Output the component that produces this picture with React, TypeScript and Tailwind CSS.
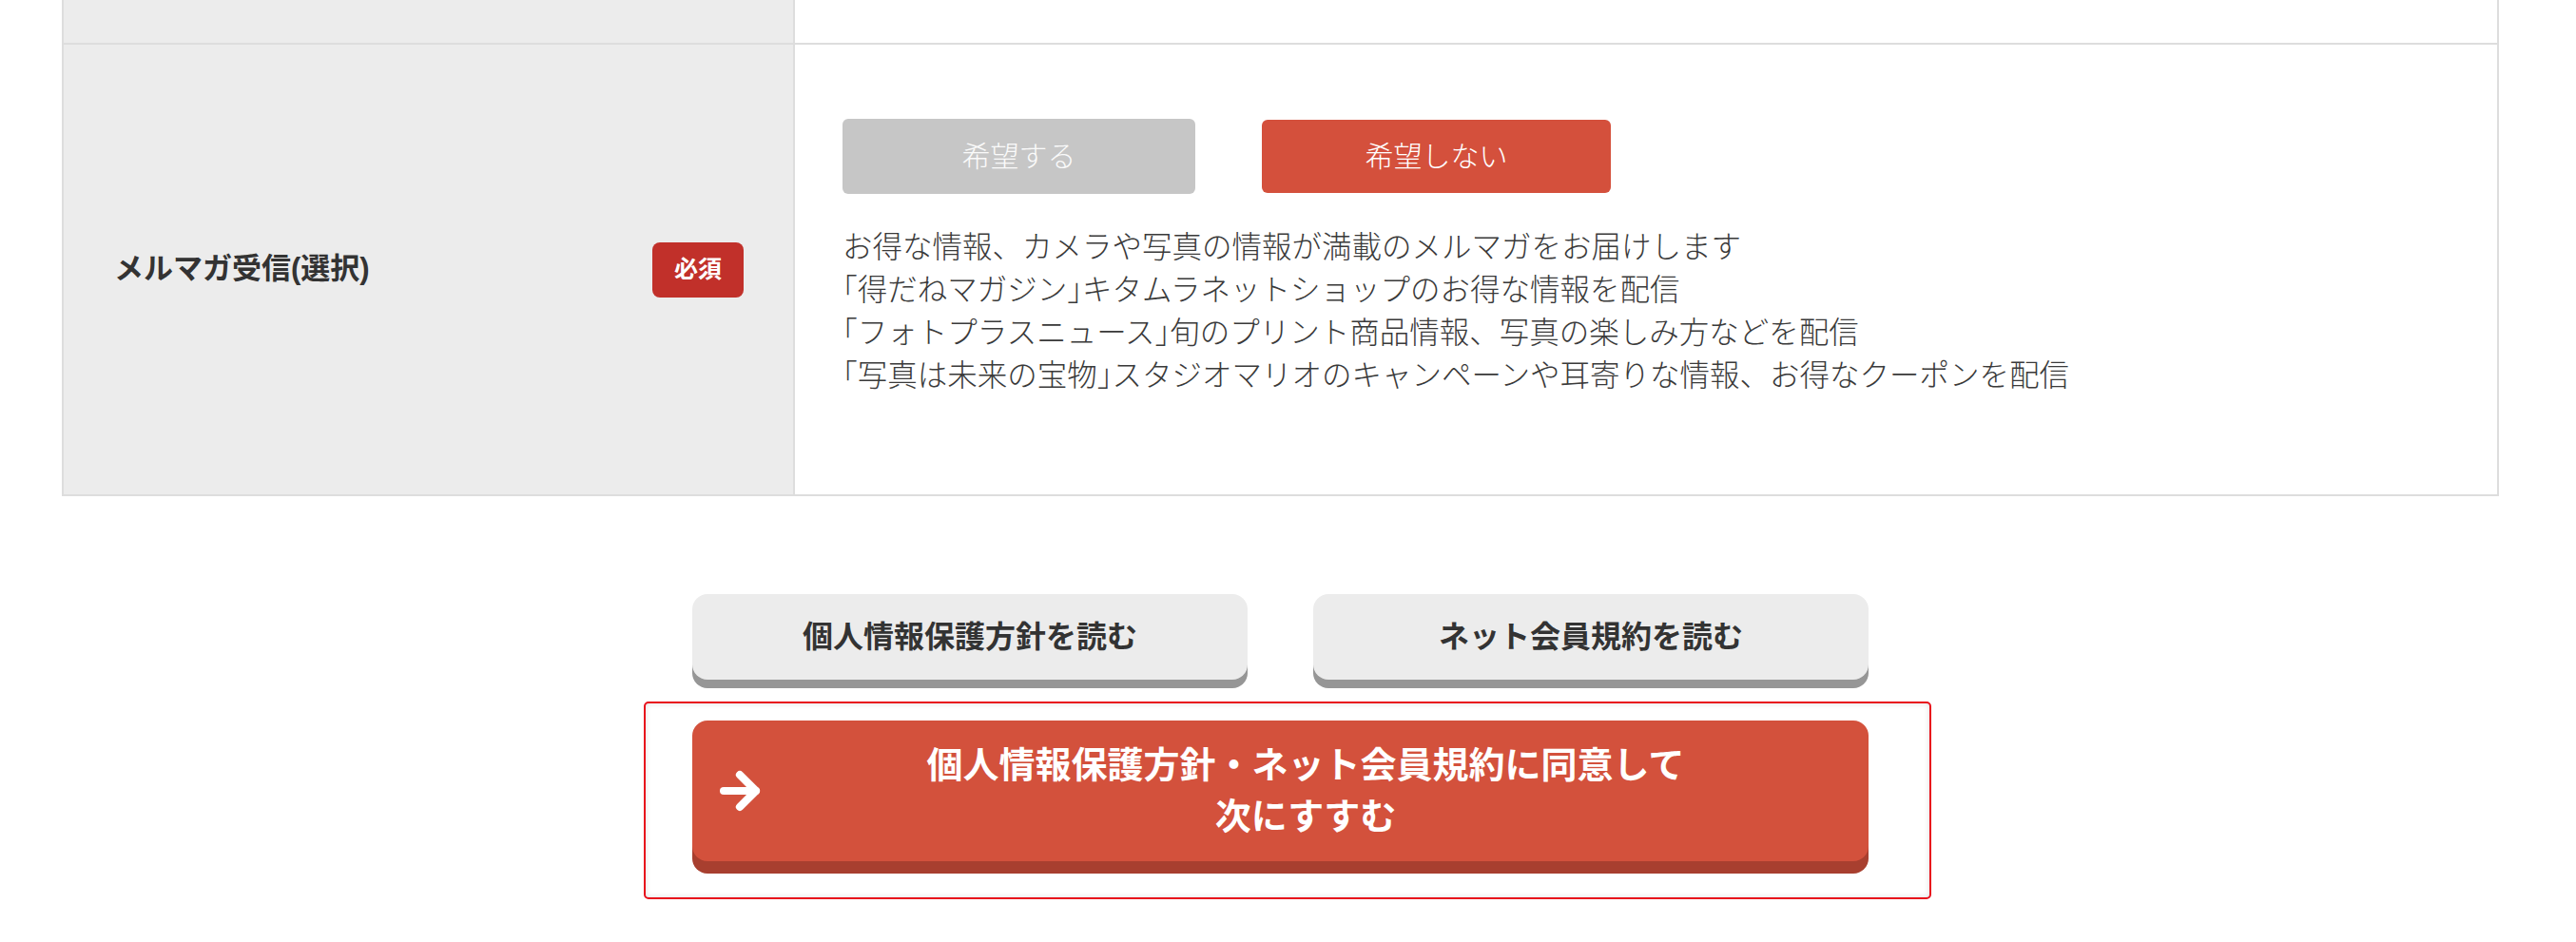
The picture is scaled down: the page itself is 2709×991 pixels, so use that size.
import { ArrowRight } from "lucide-react";

const font = "font-['Liberation_Sans','Noto_Sans_CJK_JP',sans-serif]";

// half-width brackets, like the original page font
function B({ children }: { children: string }) {
  return <span className="[font-feature-settings:'halt']">{children}</span>;
}

export default function App() {
  return (
    <div className={`w-[2709px] h-[991px] bg-white text-[#333] ${font}`}>
      {/* Form table */}
      <div className="ml-[65px] w-[2563px] border-x-2 border-b-2 border-[#dddddd]">
        {/* previous row (cut off) */}
        <div className="flex h-[45px]">
          <div className="w-[769px] bg-[#ececec] border-r-2 border-[#dddddd]" />
          <div className="flex-1 bg-white" />
        </div>

        {/* newsletter row */}
        <div className="flex border-t-2 border-[#dddddd]">
          <div className="w-[769px] shrink-0 bg-[#ececec] border-r-2 border-[#dddddd] flex items-center justify-between pl-[53px] pr-[52px]">
            <span className="text-[31px] font-bold text-[#333]">メルマガ受信(選択)</span>
            <span className="w-[96px] h-[58px] rounded-[8px] bg-[#c1302a] text-white text-[25px] font-bold flex items-center justify-center">
              必須
            </span>
          </div>

          <div className="flex-1 pl-[50px] pt-[78px] pb-[102px]">
            <div className="flex items-center gap-[70px]">
              <button className="w-[371px] h-[79px] rounded-[6px] bg-[#c6c6c6] text-[#fafafa] text-[30px] font-light">
                希望する
              </button>
              <button className="w-[367px] h-[77px] rounded-[6px] bg-[#d4503c] text-white text-[30px] font-light">
                希望しない
              </button>
            </div>
            <div className="mt-[34px] text-[31.5px] leading-[45px] text-[#3a3a3a] font-light">
              <p>お得な情報、カメラや写真の情報が満載のメルマガをお届けします</p>
              <p>
                <B>「</B>得だねマガジン<B>」</B>キタムラネットショップのお得な情報を配信
              </p>
              <p>
                <B>「</B>フォトプラスニュース<B>」</B>旬のプリント商品情報、写真の楽しみ方などを配信
              </p>
              <p>
                <B>「</B>写真は未来の宝物<B>」</B>スタジオマリオのキャンペーンや耳寄りな情報、お得なクーポンを配信
              </p>
            </div>
          </div>
        </div>
      </div>

      {/* Read buttons */}
      <div className="ml-[728px] mt-[103px] flex gap-[69px]">
        <button className="w-[584px] h-[90px] rounded-[16px] bg-[#ececec] shadow-[0_9px_0_#969696] text-[32px] font-bold text-[#333]">
          個人情報保護方針を読む
        </button>
        <button className="w-[584px] h-[90px] rounded-[16px] bg-[#ececec] shadow-[0_9px_0_#969696] text-[32px] font-bold text-[#333]">
          ネット会員規約を読む
        </button>
      </div>

      {/* Agree and continue */}
      <div className="ml-[677px] mt-[23px] w-[1354px] rounded-[5px] border-2 border-[#e8101c] pl-[49px] pr-[64px] pt-[18px] pb-[38px] shadow-[inset_0_0_6px_rgba(0,0,0,0.12)]">
        <button className="relative w-[1237px] h-[148px] rounded-[16px] bg-[#d3513c] shadow-[0_13px_0_#a83f2f] text-white text-[38px] font-bold leading-[54px] pl-[100px] pr-[47px]">
          <ArrowRight
            className="absolute left-[21px] top-1/2 -translate-y-1/2"
            size={58}
            strokeWidth={3.4}
            color="#ffffff"
          />
          個人情報保護方針・ネット会員規約に同意して
          <br />
          次にすすむ
        </button>
      </div>
    </div>
  );
}
